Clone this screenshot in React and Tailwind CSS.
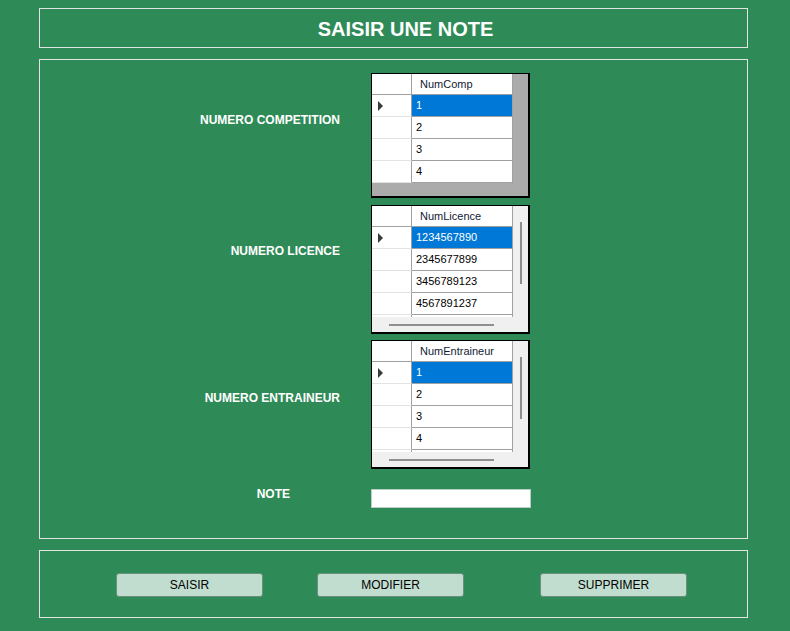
import React from 'react';

const FONT = { fontFamily: '"Liberation Sans", Arial, sans-serif' };

function Pointer() {
  return (
    <svg width="6" height="10" viewBox="0 0 6 10" className="ml-[6px]">
      <path d="M0 0 L5 5 L0 10 Z" fill="#3a3a3a" />
    </svg>
  );
}

function DataGrid({ header, rows, scroll }) {
  return (
    <div className="flex flex-col w-[159px] border-l border-t border-r-2 border-b-2 border-black bg-[#ababab]">
      <div className="flex">
        <div className="flex flex-col">
          {/* header row */}
          <div className="flex h-[21px]">
            <div className="w-[40px] bg-white border-r border-b border-[#a0a0a0]" />
            <div className="w-[101px] bg-white border-r border-b border-[#a0a0a0] pl-[8px] text-[11px] leading-[20px] text-[#111a33]">
              {header}
            </div>
          </div>
          {rows.map((r, i) => (
            <div key={r} className="flex h-[22px]">
              <div className="w-[40px] bg-white border-r border-b border-r-[#a0a0a0] border-b-[#e3e3e3] flex items-center">
                {i === 0 && <Pointer />}
              </div>
              <div
                className={
                  i === 0
                    ? 'w-[101px] bg-[#0078d7] text-white border-r border-b border-[#a0a0a0] pl-[4px] text-[11px] leading-[21px]'
                    : 'w-[101px] bg-white text-black border-r border-b border-[#a0a0a0] pl-[4px] text-[11px] leading-[21px]'
                }
              >
                {r}
              </div>
            </div>
          ))}
          {scroll && (
            <div className="flex h-[2px]">
              <div className="w-[40px] bg-white border-r border-[#a0a0a0]" />
              <div className="w-[101px] bg-white border-r border-[#a0a0a0]" />
            </div>
          )}
        </div>
        {scroll ? (
          <div className="w-[15px] bg-[#f0f0f0] flex justify-center pt-[16px]">
            <div className="w-[2px] h-[62px] bg-[#8f8f8f]" />
          </div>
        ) : (
          <div className="w-[15px]" />
        )}
      </div>
      {scroll ? (
        <div className="h-[15px] bg-[#f0f0f0] flex items-center pl-[17px]">
          <div className="w-[105px] h-[2px] bg-[#8f8f8f]" />
        </div>
      ) : (
        <div className="h-[13px]" />
      )}
    </div>
  );
}

function Label({ children, className }) {
  return (
    <div className={`w-[300px] text-right text-white font-bold text-[12px] leading-[14px] ${className}`}>
      {children}
    </div>
  );
}

function Btn({ children, className }) {
  return (
    <button
      className={`w-[147px] h-[24px] bg-[#c1ddcf] border border-[#6b8f7b] rounded-[3px] text-[12px] text-black ${className}`}
    >
      {children}
    </button>
  );
}

export default function App() {
  return (
    <div className="w-[790px] h-[631px] bg-[#2e8b57] pl-[39px] pt-[8px]" style={FONT}>
      <div className="w-[709px] h-[40px] border border-[#e4e4e4] flex items-center justify-center pl-[24px]">
        <h1 className="text-white font-bold text-[20px] leading-[24px] pt-[2px]">SAISIR UNE NOTE</h1>
      </div>

      <div className="w-[709px] h-[480px] mt-[11px] border border-[#e4e4e4] pt-[13px] flex flex-col">
        <div className="flex items-start">
          <Label className="mt-[40px]">NUMERO COMPETITION</Label>
          <div className="ml-[31px]">
            <DataGrid header="NumComp" rows={['1', '2', '3', '4']} />
          </div>
        </div>
        <div className="flex items-start mt-[7px]">
          <Label className="mt-[39px]">NUMERO LICENCE</Label>
          <div className="ml-[31px]">
            <DataGrid
              header="NumLicence"
              rows={['1234567890', '2345677899', '3456789123', '4567891237']}
              scroll
            />
          </div>
        </div>
        <div className="flex items-start mt-[6px]">
          <Label className="mt-[51px]">NUMERO ENTRAINEUR</Label>
          <div className="ml-[31px]">
            <DataGrid header="NumEntraineur" rows={['1', '2', '3', '4']} scroll />
          </div>
        </div>
        <div className="flex items-start mt-[18px]">
          <Label className="pr-[50px]">NOTE</Label>
          <input
            type="text"
            className="ml-[31px] mt-[2px] w-[160px] h-[19px] bg-white border border-[#b9cfc3] outline-none"
          />
        </div>
      </div>

      <div className="w-[709px] h-[68px] mt-[11px] border border-[#e4e4e4] pt-[22px] flex items-start">
        <Btn className="ml-[76px]">SAISIR</Btn>
        <Btn className="ml-[54px]">MODIFIER</Btn>
        <Btn className="ml-[76px]">SUPPRIMER</Btn>
      </div>
    </div>
  );
}
